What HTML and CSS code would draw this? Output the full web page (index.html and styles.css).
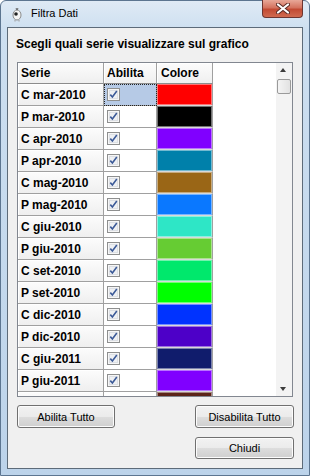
FILE: index.html
```html
<!DOCTYPE html>
<html>

<head>
    <title>Filtra Dati</title>
    <link rel="stylesheet" href="styles.css">
</head>

<body>
    <div class="window">
        <div class="titlebar">
            <svg class="appIcon" width="10" height="15" viewBox="0 0 10 15">
                <ellipse cx="5" cy="8" rx="4" ry="5" fill="#f4f4f4" stroke="#8a8a8a" stroke-width="1" />
                <circle cx="4" cy="7" r="1.8" fill="#222" />
                <path d="M4 1 L5 3 L6 1" stroke="#666" fill="none" />
                <path d="M3 13 L3 14.5 M7 13 L7 14.5" stroke="#999" />
            </svg>
            <span class="title">Filtra Dati</span>
            <div class="closeBtn">
                <svg width="14" height="11" viewBox="0 0 14 11">
                    <path d="M2 1.5 L12 9.5 M12 1.5 L2 9.5" stroke="#5a2a24" stroke-width="4" stroke-linecap="round" />
                    <path d="M2 1.5 L12 9.5 M12 1.5 L2 9.5" stroke="#ffffff" stroke-width="2.2" stroke-linecap="round" />
                </svg>
            </div>
        </div>

        <div class="client">
            <div class="heading">Scegli quali serie visualizzare sul grafico</div>

            <div class="grid">
                <div class="gridBody" id="gridBody">
                    <div class="row headRow">
                        <div class="cell serie">Serie</div>
                        <div class="cell abil">Abilita</div>
                        <div class="cell colore">Colore</div>
                    </div>
                </div>
                <div class="scrollbar">
                    <div class="arrow up"></div>
                    <div class="thumb"></div>
                    <div class="track"></div>
                    <div class="arrow down"></div>
                </div>
            </div>

            <div class="actions">
                <button class="btn">Abilita Tutto</button>
                <button class="btn">Disabilita Tutto</button>
                <span></span>
                <button class="btn btnShort">Chiudi</button>
            </div>
        </div>
    </div>

    <script>
        const series = [
            ['C mar-2010', '#ff0000'],
            ['P mar-2010', '#000000'],
            ['C apr-2010', '#8000ff'],
            ['P apr-2010', '#0080aa'],
            ['C mag-2010', '#9a6616'],
            ['P mag-2010', '#0a78ff'],
            ['C giu-2010', '#2ee6c6'],
            ['P giu-2010', '#66cc33'],
            ['C set-2010', '#00e86c'],
            ['P set-2010', '#00ff00'],
            ['C dic-2010', '#0033ff'],
            ['P dic-2010', '#4d00c8'],
            ['C giu-2011', '#101c6c'],
            ['P giu-2011', '#8000ff'],
            ['', '#5c2418']
        ];

        const checkSvg = `<svg class="check" width="13" height="13" viewBox="0 0 13 13">
            <rect x="0.5" y="0.5" width="12" height="12" fill="#f6f6f6" stroke="#8e8f8f" />
            <rect x="2.5" y="2.5" width="8" height="8" fill="#eef0f3" stroke="#dcdfe4" />
            <path d="M3.3 6.6 L5.4 9 L9.8 3" stroke="#3c5a98" stroke-width="1.6" fill="none" />
        </svg>`;

        const gridBody = document.getElementById('gridBody');
        series.forEach((s, i) => {
            const row = document.createElement('div');
            row.className = 'row';
            row.innerHTML = `
                <div class="cell serie">${s[0]}</div>
                <div class="cell abil${i === 0 ? ' selected' : ''}">${checkSvg}</div>
                <div class="cell colore"><div class="swatch" style="background:${s[1]}"></div></div>
            `;
            gridBody.appendChild(row);
        });
    </script>
</body>

</html>
```

FILE: styles.css
```css
* {
    box-sizing: border-box;
}

body {
    margin: 0;
    font-family: "Liberation Sans", Arial, sans-serif;
    font-size: 12px;
}

.window {
    width: 310px;
    height: 476px;
    display: flex;
    flex-direction: column;
    padding: 0 6px 6px 6px;
    border: 1px solid #5c7590;
    border-radius: 6px 6px 0 0;
    background: linear-gradient(to bottom, #dfeaf5 0%, #cddff0 30px, #bcd3ea 100%);
}

.titlebar {
    height: 26px;
    display: flex;
    align-items: flex-start;
}

.appIcon {
    margin: 6px 0 0 5px;
}

.title {
    margin: 6px 0 0 9px;
    font-size: 11px;
    color: #000;
}

.closeBtn {
    margin-left: auto;
    width: 41px;
    height: 18px;
    margin-top: -1px;
    border: 1px solid #6d3530;
    border-top: none;
    border-radius: 0 0 4px 4px;
    background: linear-gradient(to bottom, #e8a898 0%, #d4735f 45%, #c24a33 55%, #d06a50 100%);
    display: flex;
    align-items: center;
    justify-content: center;
}

.client {
    flex: 1;
    border: 1px solid #5d6b79;
    background: #f0f0f0;
    padding-top: 9px;
}

.heading {
    font-weight: bold;
    font-size: 12px;
    line-height: 14px;
    padding-left: 8px;
    margin-bottom: 11px;
}

.grid {
    margin-left: 9px;
    width: 276px;
    height: 335px;
    border: 1px solid #828790;
    background: #fff;
    display: flex;
}

.gridBody {
    flex: 1;
    overflow: hidden;
}

.row {
    display: flex;
    height: 22px;
}

.headRow {
    height: 21px;
}

.cell {
    height: 100%;
    display: flex;
    align-items: center;
    border-right: 1px solid #a0a0a0;
    border-bottom: 1px solid #a0a0a0;
    font-weight: bold;
}

.serie {
    width: 86px;
    padding-left: 3px;
    background: linear-gradient(to bottom, #fcfcfc, #efefef);
    box-shadow: inset 1px 1px 0 #ffffff;
}

.abil {
    width: 53px;
    padding-left: 3px;
}

.headRow .abil,
.headRow .colore {
    background: linear-gradient(to bottom, #fcfcfc, #efefef);
    box-shadow: inset 1px 1px 0 #ffffff;
}

.headRow .cell {
    border-bottom-color: #8c8c8c;
}

.colore {
    width: 56px;
    padding-left: 4px;
}

.row .colore:has(.swatch) {
    padding: 0;
    border-bottom-color: #d8d8d8;
}

.swatch {
    width: 100%;
    height: 100%;
    box-shadow: inset 0 0 0 1px rgba(255, 255, 255, 0.45);
}

.selected {
    background: #b6cae6;
    outline: 1px dotted #222;
    outline-offset: -1px;
}

.scrollbar {
    width: 16px;
    background: #f3f3f3;
    display: flex;
    flex-direction: column;
    align-items: center;
}

.arrow {
    height: 16px;
    width: 16px;
    position: relative;
}

.arrow::after {
    content: "";
    position: absolute;
    left: 4px;
    width: 0;
    height: 0;
    border-left: 3.5px solid transparent;
    border-right: 3.5px solid transparent;
}

.arrow.up::after {
    top: 5px;
    border-bottom: 4px solid #3c3c3c;
}

.arrow.down::after {
    top: 7px;
    border-top: 4px solid #3c3c3c;
}

.thumb {
    width: 14px;
    height: 15px;
    border: 1px solid #9a9a9a;
    border-radius: 2px;
    background: linear-gradient(to right, #f4f4f4, #e2e2e2);
}

.track {
    flex: 1;
}

.actions {
    display: grid;
    grid-template-columns: 98px 99px;
    justify-content: space-between;
    row-gap: 9px;
    margin: 8px 8px 0 9px;
}

.btn {
    height: 23px;
    font-family: "Liberation Sans", Arial, sans-serif;
    font-size: 11px;
    color: #000;
    border: 1px solid #707070;
    border-radius: 3px;
    background: linear-gradient(to bottom, #f2f2f2 0%, #ebebeb 50%, #dddddd 51%, #cfcfcf 100%);
    box-shadow: inset 0 0 0 1px #fcfcfc;
    padding: 0;
}

.btnShort {
    height: 22px;
}
```
